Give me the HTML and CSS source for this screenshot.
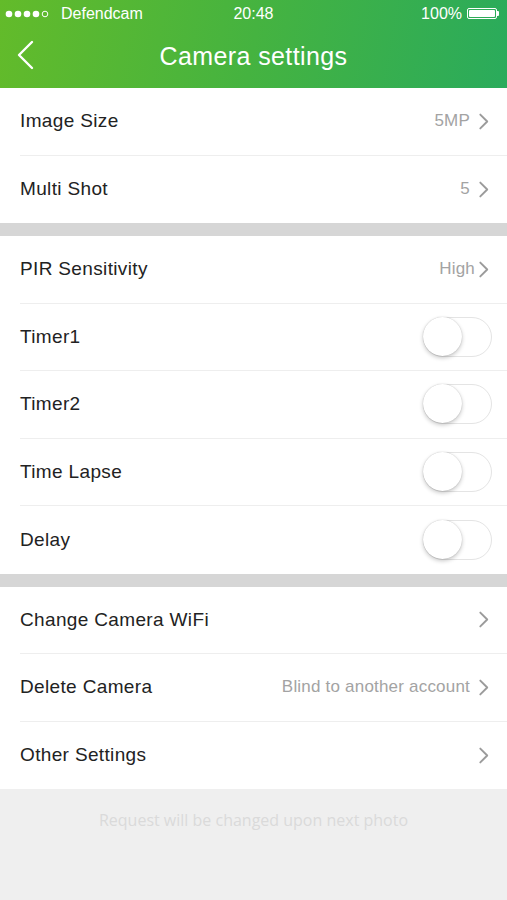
FILE: index.html
```html
<!DOCTYPE html>
<html>
<head>
<meta charset="utf-8">
<link rel="stylesheet" href="styles.css">
</head>
<body>
<div class="screen">
  <header class="header">
    <div class="status">
      <div class="status-left">
        <svg class="dots" width="48" height="8" viewBox="0 0 48 8"><circle cx="4" cy="4" r="3.3" fill="#fff"/><circle cx="13" cy="4" r="3.3" fill="#fff"/><circle cx="22" cy="4" r="3.3" fill="#fff"/><circle cx="31" cy="4" r="3.3" fill="#fff"/><circle cx="40" cy="4" r="2.8" fill="none" stroke="#fff" stroke-width="1"/></svg>
        <span>Defendcam</span>
      </div>
      <div class="status-time">20:48</div>
      <div class="status-right">100% <span class="battery"><span class="battery-fill"></span></span><span class="battery-tip"></span></div>
    </div>
    <div class="nav">
      <svg class="back" width="20" height="30" viewBox="0 0 20 30"><path d="M16 2 L3 15 L16 28" fill="none" stroke="#fff" stroke-width="2.4" stroke-linecap="round" stroke-linejoin="round"/></svg>
      <div class="title">Camera settings</div>
    </div>
  </header>

  <section class="group">
    <div class="row"><span class="label">Image Size</span><span class="value">5MP</span><svg class="chev" viewBox="0 0 10 16"><path d="M2 1.5 L8.5 8 L2 14.5" /></svg></div>
    <div class="row last"><span class="label">Multi Shot</span><span class="value">5</span><svg class="chev" viewBox="0 0 10 16"><path d="M2 1.5 L8.5 8 L2 14.5" /></svg></div>
  </section>
  <div class="gap"></div>
  <section class="group">
    <div class="row"><span class="label">PIR Sensitivity</span><span class="value tight">High</span><svg class="chev" viewBox="0 0 10 16"><path d="M2 1.5 L8.5 8 L2 14.5" /></svg></div>
    <div class="row"><span class="label">Timer1</span><span class="switch"><span class="knob"></span></span></div>
    <div class="row"><span class="label">Timer2</span><span class="switch"><span class="knob"></span></span></div>
    <div class="row"><span class="label">Time Lapse</span><span class="switch"><span class="knob"></span></span></div>
    <div class="row last"><span class="label">Delay</span><span class="switch"><span class="knob"></span></span></div>
  </section>
  <div class="gap"></div>
  <section class="group">
    <div class="row"><span class="label">Change Camera WiFi</span><svg class="chev" viewBox="0 0 10 16"><path d="M2 1.5 L8.5 8 L2 14.5" /></svg></div>
    <div class="row"><span class="label">Delete Camera</span><span class="value">Blind to another account</span><svg class="chev" viewBox="0 0 10 16"><path d="M2 1.5 L8.5 8 L2 14.5" /></svg></div>
    <div class="row last"><span class="label">Other Settings</span><svg class="chev" viewBox="0 0 10 16"><path d="M2 1.5 L8.5 8 L2 14.5" /></svg></div>
  </section>
  <footer class="footer">Request will be changed upon next photo</footer>
</div>
</body>
</html>
```

FILE: styles.css
```css
* { box-sizing: border-box; }
html, body { margin: 0; padding: 0; }
body {
  width: 507px;
  height: 900px;
  overflow: hidden;
  background: #efefef;
  font-family: "Liberation Sans", Arial, sans-serif;
}
.screen {
  display: flex;
  flex-direction: column;
  height: 900px;
}
.header {
  height: 88px;
  background: linear-gradient(100deg, #63bb2a 0%, #45b340 50%, #2aab5c 100%);
  color: #fff;
  display: flex;
  flex-direction: column;
}
.status {
  height: 27px;
  display: flex;
  align-items: center;
  justify-content: space-between;
  padding: 0 8px 0 5px;
  font-size: 16px;
  position: relative;
}
.status-left { display: flex; align-items: center; gap: 8px; }
.dots { display: block; }
.status-time {
  position: absolute;
  left: 0; right: 0;
  text-align: center;
  pointer-events: none;
}
.status-right { display: flex; align-items: center; gap: 5px; }
.battery {
  display: inline-block;
  width: 30px;
  height: 11px;
  border: 1px solid #fff;
  border-radius: 2px;
  padding: 1px;
}
.battery-fill { display: block; width: 100%; height: 100%; background: #fff; border-radius: 1px; }
.battery-tip { display: inline-block; width: 2px; height: 5px; background: #fff; margin-left: -5px; border-radius: 0 1px 1px 0; }
.nav {
  flex: 1;
  display: flex;
  align-items: center;
  position: relative;
  padding-left: 16px;
}
.back { display: block; margin-top: -5px; }
.title {
  position: absolute;
  left: 0; right: 0;
  text-align: center;
  font-size: 25px;
  top: 15px;
  letter-spacing: 0.4px;
}
.group { background: #fff; }
.row {
  height: 67.5px;
  margin-left: 20px;
  padding-right: 18px;
  border-bottom: 1px solid #eeeeee;
  display: flex;
  align-items: center;
}
.row.last { border-bottom: none; }
.label {
  flex: 1;
  font-size: 19px;
  color: #222;
  letter-spacing: 0.35px;
}
.value {
  font-size: 17px;
  color: #a3a3a3;
  margin-right: 8px;
  letter-spacing: 0.2px;
}
.value.tight { margin-right: 3px; }
.chev {
  width: 11px;
  height: 17px;
  fill: none;
  stroke: #9b9b9b;
  stroke-width: 1.8;
  stroke-linecap: round;
  stroke-linejoin: round;
}
.switch {
  width: 69px;
  height: 40px;
  border-radius: 20px;
  border: 1.5px solid #e4e4e4;
  background: #fff;
  position: relative;
  margin-right: -3px;
}
.knob {
  position: absolute;
  left: -1px;
  top: -1px;
  width: 39px;
  height: 39px;
  border-radius: 50%;
  background: #fff;
  box-shadow: 0 2px 4px rgba(0,0,0,0.22), 0 0 1px rgba(0,0,0,0.25);
}
.gap { height: 13px; background: #d6d6d6; }
.footer {
  flex: 1;
  background: #efefef;
  text-align: center;
  color: #dadada;
  font-family: "Open Sans", "Liberation Sans", sans-serif;
  font-size: 16px;
  padding-top: 20px;
}
```
